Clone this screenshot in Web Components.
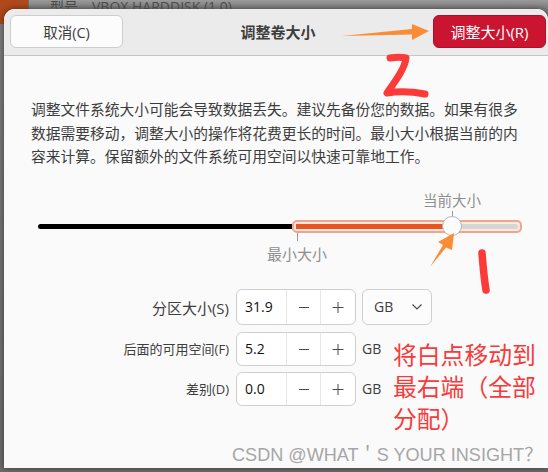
<!DOCTYPE html>
<html>
<head>
<meta charset="utf-8">
<title>调整卷大小</title>
<style>
    html, body { margin: 0; padding: 0; }
    body { font-family: "Open Sans", "Noto Sans CJK SC", sans-serif; }
</style>
</head>
<body>
<desktop-shell>
    <resize-dialog heading="调整卷大小">
        <size-slider></size-slider>
        <size-form></size-form>
    </resize-dialog>
    <note-layer></note-layer>
</desktop-shell>

<script>
/**
 * The dimmed desktop behind the dialog.
 */
class DesktopShell extends HTMLElement {
    constructor() {
        super();
        this.attachShadow({ mode: 'open' });
    }

    connectedCallback() {
        this.shadowRoot.innerHTML = `
            <style>
                :host {
                    display: block;
                    position: relative;
                    width: 548px;
                    height: 472px;
                    overflow: hidden;
                    background:
                        linear-gradient(#b04a1c, #a8461b) 0 0 / 28px 24px no-repeat,
                        linear-gradient(#6f6f6f, #6f6f6f) 28px 0 / 1px 100% no-repeat,
                        linear-gradient(#9a9a9a, #7d7d7d 9px, #6c6c6c 100%);
                }
                .behind {
                    display: flex;
                    gap: 14px;
                    height: 9px;
                    overflow: hidden;
                    padding-left: 50px;
                    font-size: 14px;
                    line-height: 13px;
                    color: #4a4a4a;
                }
                .dialog-slot {
                    display: block;
                    margin-left: 4px;
                    height: 459px;
                }
            </style>
            <div class="behind"><span>型号</span><span>VBOX HARDDISK (1.0)</span></div>
            <div class="dialog-slot"><slot></slot></div>
        `;
    }
}

/**
 * Dialog frame: header bar with the two actions, then the body.
 */
class ResizeDialog extends HTMLElement {
    constructor() {
        super();
        this.attachShadow({ mode: 'open' });
    }

    connectedCallback() {
        const heading = this.getAttribute('heading');
        this.shadowRoot.innerHTML = `
            <style>
                :host {
                    display: flex;
                    flex-direction: column;
                    height: 459px;
                    border-radius: 11px 11px 0 0;
                    overflow: hidden;
                    background: #fafafa;
                    box-shadow: 0 0 6px rgba(0, 0, 0, .5);
                }
                header {
                    display: grid;
                    grid-template-columns: 113px 1fr 113px;
                    align-items: center;
                    height: 47px;
                    box-sizing: border-box;
                    padding: 6px 2px 7px 6px;
                    background: #ebebeb;
                    border-bottom: 1px solid #c6c6c6;
                }
                h1 {
                    margin: 0;
                    text-align: center;
                    font-size: 15px;
                    font-weight: 700;
                    color: #3d3d3d;
                }
                button {
                    height: 33px;
                    padding: 0;
                    font: inherit;
                    font-size: 14.5px;
                    border-radius: 6px;
                }
                .cancel {
                    background: #fcfcfc;
                    border: 1px solid #cdcdcd;
                    color: #3d3d3d;
                }
                .apply {
                    background: #cb1530;
                    border: 1px solid #ab1229;
                    color: #fff;
                    font-size: 15px;
                }
                p {
                    margin: 0;
                    padding: 42px 26px 0 27px;
                    font-size: 14.75px;
                    line-height: 23.5px;
                    color: #3d3d3d;
                }
            </style>
            <header>
                <button class="cancel">取消(C)</button>
                <h1>${heading}</h1>
                <button class="apply">调整大小(R)</button>
            </header>
            <p>调整文件系统大小可能会导致数据丢失。建议先备份您的数据。如果有很多数据需要移动，调整大小的操作将花费更长的时间。最小大小根据当前的内容来计算。保留额外的文件系统可用空间以快速可靠地工作。</p>
            <slot></slot>
        `;
    }
}

/**
 * Volume size slider with the highlighted editable range.
 */
class SizeSlider extends HTMLElement {
    constructor() {
        super();
        this.attachShadow({ mode: 'open' });
    }

    connectedCallback() {
        this.shadowRoot.innerHTML = `
            <style>
                :host {
                    display: block;
                    margin-top: 22px;
                    font-size: 14.5px;
                    color: #8f8f8f;
                }
                .current {
                    padding-left: 419px;
                    line-height: 20px;
                }
                .rail {
                    display: flex;
                    align-items: center;
                    height: 13px;
                    margin-top: 9px;
                    padding-left: 34px;
                }
                .used {
                    width: 254px;
                    height: 5px;
                    background: #000;
                    border-radius: 3px 0 0 3px;
                }
                .range {
                    position: relative;
                    display: flex;
                    align-items: center;
                    box-sizing: border-box;
                    width: 230px;
                    height: 13px;
                    padding: 0 2px;
                    border: 2px solid #f3a58b;
                    border-radius: 5px;
                    background: #fbe9e2;
                }
                .fill {
                    width: 155px;
                    height: 5px;
                    background: #e95420;
                }
                .rest {
                    flex: 1;
                    height: 5px;
                    background: #d6d6d6;
                    border-radius: 0 3px 3px 0;
                }
                .thumb {
                    position: absolute;
                    left: 148px;
                    top: -6px;
                    width: 20px;
                    height: 20px;
                    box-sizing: border-box;
                    border-radius: 50%;
                    background: #fcfcfc;
                    border: 1px solid #b5b5b5;
                }
                .mark {
                    position: absolute;
                    left: 158px;
                    top: -11px;
                    width: 1px;
                    height: 5px;
                    background: #999;
                }
                .tick {
                    width: 1px;
                    height: 8px;
                    margin-left: 293px;
                    background: #999;
                }
                .minimum {
                    padding-left: 263px;
                    margin-top: 3px;
                    font-size: 15px;
                    line-height: 20px;
                }
            </style>
            <div class="current">当前大小</div>
            <div class="rail">
                <div class="used"></div>
                <div class="range">
                    <div class="fill"></div>
                    <div class="rest"></div>
                    <div class="mark"></div>
                    <div class="thumb"></div>
                </div>
            </div>
            <div class="tick"></div>
            <div class="minimum">最小大小</div>
        `;
    }
}

/**
 * Number entry with the minus and plus buttons.
 */
class SpinField extends HTMLElement {
    constructor() {
        super();
        this.attachShadow({ mode: 'open' });
    }

    connectedCallback() {
        this.shadowRoot.innerHTML = `
            <style>
                :host {
                    display: grid;
                    grid-template-columns: 49px 34px 1fr;
                    box-sizing: border-box;
                    width: 120px;
                    height: var(--spin-height, 34px);
                    background: #fff;
                    border: 1px solid #cfcfcf;
                    border-radius: 6px;
                    font-size: 14px;
                    color: #111;
                }
                div {
                    display: flex;
                    align-items: center;
                    justify-content: center;
                }
                .value {
                    justify-content: flex-start;
                    padding-left: 8px;
                }
                .step {
                    border-left: 1px solid #e6e6e6;
                }
                svg {
                    width: 12px;
                    height: 12px;
                    stroke: #4a4a4a;
                    stroke-width: 1;
                    fill: none;
                }
            </style>
            <div class="value">${this.getAttribute('value')}</div>
            <div class="step"><svg viewBox="0 0 12 12"><path d="M1 6.500h10"/></svg></div>
            <div class="step"><svg viewBox="0 0 12 12"><path d="M.5 6.500h11M6 1v11"/></svg></div>
        `;
    }
}

/**
 * The three size rows: label, spin field, unit.
 */
class SizeForm extends HTMLElement {
    constructor() {
        super();
        this.attachShadow({ mode: 'open' });
    }

    connectedCallback() {
        this.shadowRoot.innerHTML = `
            <style>
                :host {
                    display: grid;
                    grid-template-columns: 190px 120px auto;
                    grid-template-rows: 37px 34px 34px;
                    column-gap: 6px;
                    row-gap: 6px;
                    justify-content: start;
                    align-items: center;
                    margin-top: 25px;
                    padding-left: 36px;
                    color: #3d3d3d;
                }
                .label {
                    text-align: right;
                    padding-right: 1px;
                    font-size: 13px;
                }
                .label.big {
                    font-size: 15px;
                }
                .first {
                    --spin-height: 36px;
                    align-self: start;
                }
                .unit {
                    font-size: 14px;
                }
                .select {
                    display: flex;
                    align-items: center;
                    justify-content: space-between;
                    align-self: start;
                    box-sizing: border-box;
                    width: 70px;
                    height: 36px;
                    padding: 0 9px 0 11px;
                    background: #fcfcfc;
                    border: 1px solid #cfcfcf;
                    border-radius: 6px;
                    font-size: 14px;
                }
                svg {
                    width: 10px;
                    height: 6px;
                    stroke: #4a4a4a;
                    stroke-width: 1.2;
                    fill: none;
                }
            </style>
            <div class="label big">分区大小(S)</div>
            <spin-field class="first" value="31.9"></spin-field>
            <div class="select">GB<svg viewBox="0 0 10 6"><path d="M.5.5 5 5 9.5.5"/></svg></div>
            <div class="label">后面的可用空间(F)</div>
            <spin-field value="5.2"></spin-field>
            <div class="unit">GB</div>
            <div class="label">差别(D)</div>
            <spin-field value="0.0"></spin-field>
            <div class="unit">GB</div>
        `;
    }
}

/**
 * Hand-drawn annotations and the watermark lying over the screenshot.
 */
class NoteLayer extends HTMLElement {
    constructor() {
        super();
        this.attachShadow({ mode: 'open' });
    }

    connectedCallback() {
        this.shadowRoot.innerHTML = `
            <style>
                :host {
                    position: absolute;
                    inset: 0;
                    display: block;
                    pointer-events: none;
                }
                svg {
                    position: absolute;
                    inset: 0;
                }
                .note {
                    position: absolute;
                    left: 393px;
                    top: 339px;
                    width: 150px;
                    font-size: 23.8px;
                    line-height: 32px;
                    color: #f73b3b;
                }
                .mark {
                    position: absolute;
                    left: 232px;
                    top: 445px;
                    font-family: "Liberation Sans", "Noto Sans CJK SC", sans-serif;
                    font-size: 18.1px;
                    line-height: 20px;
                    white-space: nowrap;
                    color: #a6a6a6;
                }
            </style>
            <svg width="548" height="472" viewBox="0 0 548 472">
                <path fill="#fb8c36" d="M342 36 412 29V24L429 31 412 40V34.500Z"/>
                <path fill="#fb8c36" d="M454 233 452 250 446 247.500 430 267 443 245 438 242Z"/>
                <path fill="none" stroke="#fc3a3a" stroke-width="7" stroke-linecap="round" stroke-linejoin="round"
                      d="M390 58C396 57 402 57 406 58 405 68 396 80 387 93 400 91 414 92 425 94"/>
                <path fill="none" stroke="#fc3a3a" stroke-width="7.500" stroke-linecap="round"
                      d="M482 253C483 266 484 278 486 290"/>
            </svg>
            <div class="note">将白点移动到最右端（全部分配）</div>
            <div class="mark">CSDN @WHAT＇S YOUR INSIGHT？</div>
        `;
    }
}

customElements.define('desktop-shell', DesktopShell);
customElements.define('resize-dialog', ResizeDialog);
customElements.define('size-slider', SizeSlider);
customElements.define('spin-field', SpinField);
customElements.define('size-form', SizeForm);
customElements.define('note-layer', NoteLayer);
</script>
</body>
</html>
